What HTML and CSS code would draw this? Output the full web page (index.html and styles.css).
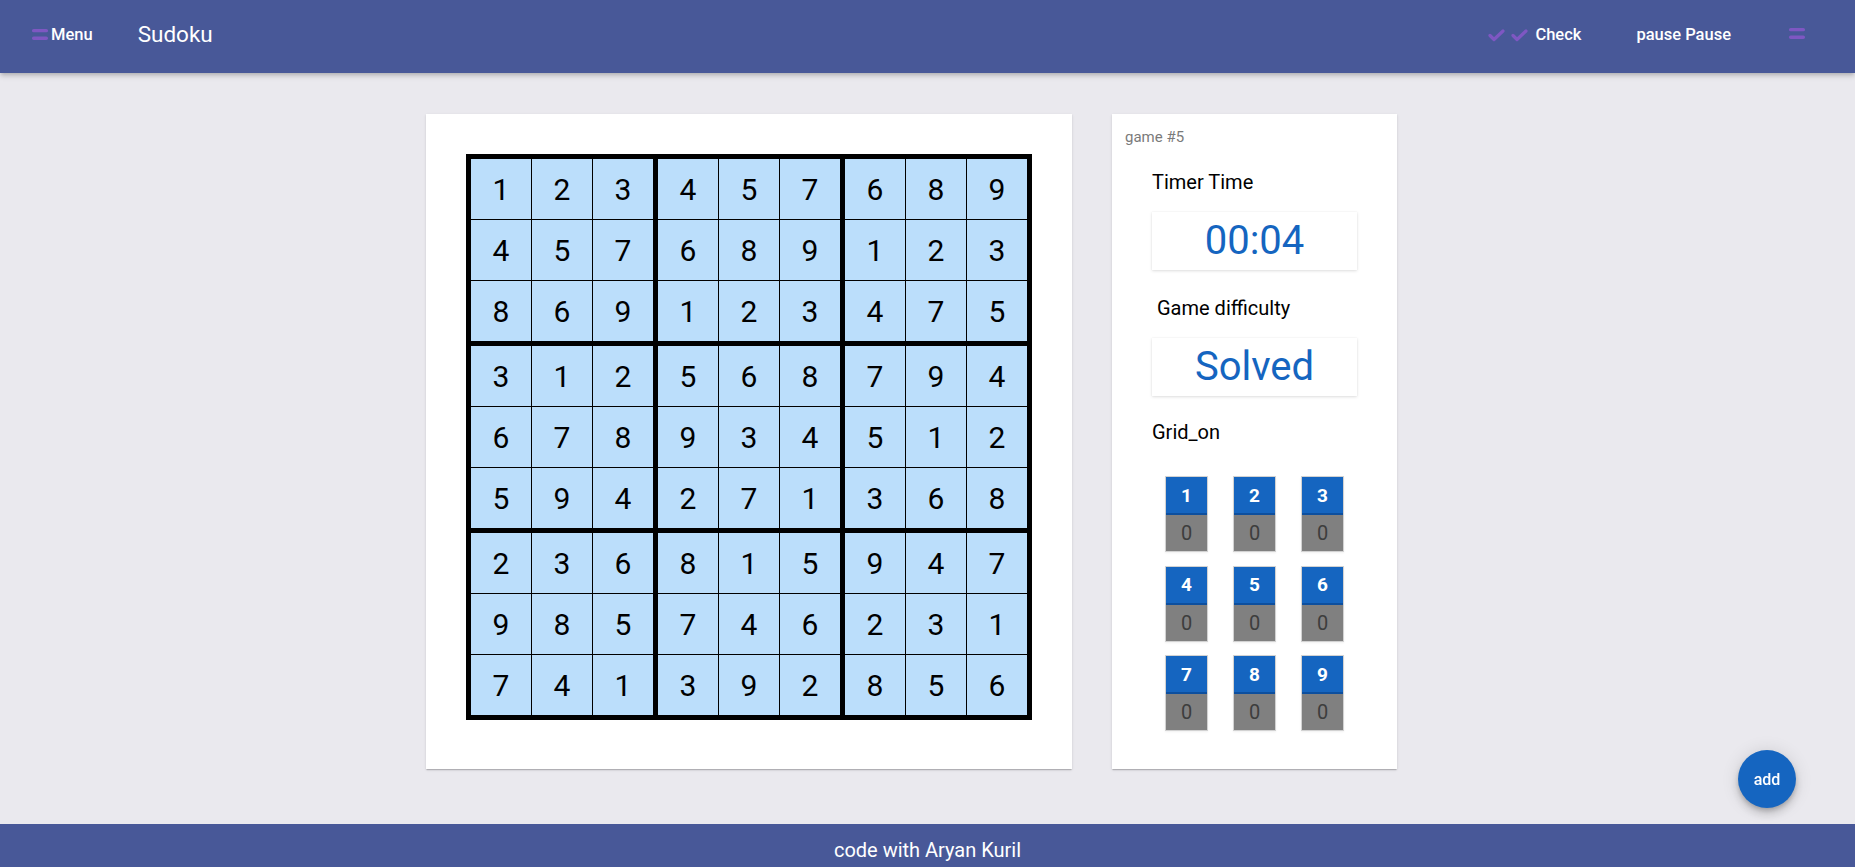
FILE: index.html
```html
<!DOCTYPE html>
<html lang="en">
<head>
<meta charset="utf-8">
<title>Sudoku</title>
<link rel="stylesheet" href="styles.css">
</head>
<body>
<header class="toolbar">
  <div class="tb-left">
    <button class="tb-btn">
      <svg class="ico-bars" width="16" height="11" viewBox="0 0 16 11"><rect x="0" y="0" width="16" height="3.3" rx="1.6"/><rect x="0" y="7.6" width="16" height="3.3" rx="1.6"/></svg>
      <span>Menu</span>
    </button>
    <span class="title">Sudoku</span>
  </div>
  <div class="tb-right">
    <button class="tb-btn check-btn">
      <svg class="ico-check" width="17" height="13" viewBox="0 0 17 13"><polyline points="2,6.5 6,10.5 15,2"/></svg>
      <svg class="ico-check" width="17" height="13" viewBox="0 0 17 13"><polyline points="2,6.5 6,10.5 15,2"/></svg>
      <span>Check</span>
    </button>
    <button class="tb-btn pause-btn"><span>pause Pause</span></button>
    <button class="tb-btn more-btn">
      <svg class="ico-bars" width="16" height="11" viewBox="0 0 16 11"><rect x="0" y="0" width="16" height="3.3" rx="1.6"/><rect x="0" y="7.6" width="16" height="3.3" rx="1.6"/></svg>
    </button>
  </div>
</header>

<main class="main">
  <section class="card board-card">
    <div class="board">
      <div class="block"><div class="cell">1</div><div class="cell">2</div><div class="cell">3</div><div class="cell">4</div><div class="cell">5</div><div class="cell">7</div><div class="cell">8</div><div class="cell">6</div><div class="cell">9</div></div>
      <div class="block"><div class="cell">4</div><div class="cell">5</div><div class="cell">7</div><div class="cell">6</div><div class="cell">8</div><div class="cell">9</div><div class="cell">1</div><div class="cell">2</div><div class="cell">3</div></div>
      <div class="block"><div class="cell">6</div><div class="cell">8</div><div class="cell">9</div><div class="cell">1</div><div class="cell">2</div><div class="cell">3</div><div class="cell">4</div><div class="cell">7</div><div class="cell">5</div></div>
      <div class="block"><div class="cell">3</div><div class="cell">1</div><div class="cell">2</div><div class="cell">6</div><div class="cell">7</div><div class="cell">8</div><div class="cell">5</div><div class="cell">9</div><div class="cell">4</div></div>
      <div class="block"><div class="cell">5</div><div class="cell">6</div><div class="cell">8</div><div class="cell">9</div><div class="cell">3</div><div class="cell">4</div><div class="cell">2</div><div class="cell">7</div><div class="cell">1</div></div>
      <div class="block"><div class="cell">7</div><div class="cell">9</div><div class="cell">4</div><div class="cell">5</div><div class="cell">1</div><div class="cell">2</div><div class="cell">3</div><div class="cell">6</div><div class="cell">8</div></div>
      <div class="block"><div class="cell">2</div><div class="cell">3</div><div class="cell">6</div><div class="cell">9</div><div class="cell">8</div><div class="cell">5</div><div class="cell">7</div><div class="cell">4</div><div class="cell">1</div></div>
      <div class="block"><div class="cell">8</div><div class="cell">1</div><div class="cell">5</div><div class="cell">7</div><div class="cell">4</div><div class="cell">6</div><div class="cell">3</div><div class="cell">9</div><div class="cell">2</div></div>
      <div class="block"><div class="cell">9</div><div class="cell">4</div><div class="cell">7</div><div class="cell">2</div><div class="cell">3</div><div class="cell">1</div><div class="cell">8</div><div class="cell">5</div><div class="cell">6</div></div>
    </div>
  </section>

  <aside class="card side-card">
    <div class="game-no">game #5</div>
    <div class="side-label timer-label">Timer Time</div>
    <div class="value-box">00:04</div>
    <div class="side-label diff-label">Game difficulty</div>
    <div class="value-box">Solved</div>
    <div class="side-label grid-label">Grid_on</div>
    <div class="tiles">
      <div class="tile"><div class="tile-num">1</div><div class="tile-count">0</div></div>
      <div class="tile"><div class="tile-num">2</div><div class="tile-count">0</div></div>
      <div class="tile"><div class="tile-num">3</div><div class="tile-count">0</div></div>
      <div class="tile"><div class="tile-num">4</div><div class="tile-count">0</div></div>
      <div class="tile"><div class="tile-num">5</div><div class="tile-count">0</div></div>
      <div class="tile"><div class="tile-num">6</div><div class="tile-count">0</div></div>
      <div class="tile"><div class="tile-num">7</div><div class="tile-count">0</div></div>
      <div class="tile"><div class="tile-num">8</div><div class="tile-count">0</div></div>
      <div class="tile"><div class="tile-num">9</div><div class="tile-count">0</div></div>
    </div>
  </aside>
</main>

<button class="fab">add</button>

<footer class="footer">code with Aryan Kuril</footer>
</body>
</html>
```

FILE: styles.css
```css
* { box-sizing: border-box; }

html, body {
  margin: 0;
  padding: 0;
  height: 100%;
}

body {
  font-family: Roboto, "Liberation Sans", Arial, sans-serif;
  background: #eae9ee;
  display: flex;
  flex-direction: column;
  height: 100vh;
  overflow: hidden;
}

button {
  font-family: inherit;
  border: 0;
  background: none;
  padding: 0;
  cursor: pointer;
}

/* ---------- toolbar ---------- */
.toolbar {
  flex: 0 0 73px;
  height: 73px;
  background: #485898;
  color: #fff;
  display: flex;
  align-items: center;
  justify-content: space-between;
  padding: 0 50px 4px 32px;
  box-shadow: 0 2px 4px -1px rgba(0,0,0,.2), 0 4px 5px 0 rgba(0,0,0,.10);
  position: relative;
  z-index: 2;
}

.tb-left, .tb-right {
  display: flex;
  align-items: center;
}

.tb-btn {
  color: #fff;
  font-size: 16.5px;
  font-weight: 500;
  line-height: 20px;
  display: flex;
  align-items: center;
}

.ico-bars { fill: #7e57c2; display: block; }
.ico-check {
  fill: none;
  stroke: #7e57c2;
  stroke-width: 3.2;
  stroke-linecap: round;
  stroke-linejoin: round;
  display: block;
  margin-top: 2px;
}

.tb-btn .ico-bars + span { margin-left: 3px; }

.title {
  font-size: 22.5px;
  line-height: 26px;
  margin-left: 45px;
  margin-bottom: 2px;
}

.check-btn .ico-check + .ico-check { margin-left: 6px; }
.check-btn span { margin-left: 7px; }

.pause-btn { margin-left: 55px; }
.more-btn { margin-left: 58px; margin-top: -2px; }

/* ---------- main ---------- */
.main {
  flex: 1 1 auto;
  display: flex;
  justify-content: center;
  align-items: flex-start;
  gap: 40px;
  padding: 41px 32px 0 0;
}

.card {
  background: #fff;
  box-shadow: 0 2px 1px -1px rgba(0,0,0,.12), 0 1px 1px 0 rgba(0,0,0,.08), 0 1px 3px 0 rgba(0,0,0,.10);
}

.board-card {
  padding: 40px 40px 49px;
}

.board {
  display: grid;
  grid-template-columns: repeat(3, 182px);
  gap: 5px;
  padding: 5px;
  background: #000;
}

.block {
  display: grid;
  grid-template-columns: repeat(3, 60px);
  grid-auto-rows: 60px;
  gap: 1px;
  background: #000;
}

.cell {
  background: #bbdefb;
  color: #000;
  font-size: 30px;
  display: flex;
  align-items: center;
  justify-content: center;
}

/* ---------- side card ---------- */
.side-card {
  width: 285px;
  height: 655px;
  padding: 15px 40px 0;
  display: flex;
  flex-direction: column;
}

.game-no {
  font-size: 15px;
  line-height: 16px;
  color: #7a7a7a;
  margin-left: -27px;
}

.side-label {
  font-size: 20px;
  line-height: 24px;
  color: #000;
}

.timer-label { margin-top: 25px; }
.diff-label { margin-top: 26px; padding-left: 5px; }
.grid-label { margin-top: 24px; }

.value-box {
  margin-top: 18px;
  height: 58px;
  line-height: 58px;
  text-align: center;
  font-size: 40px;
  color: #1565c0;
  background: #fff;
  box-shadow: 0 1px 3px rgba(0,0,0,.13), 0 0 1px rgba(0,0,0,.08);
}

.tiles {
  margin-top: 32px;
  display: grid;
  grid-template-columns: repeat(3, 43px);
  column-gap: 25px;
  row-gap: 13.5px;
  justify-content: center;
}

.tile {
  width: 43px;
  height: 76px;
  border: 1px solid #d2d2d2;
  display: flex;
  flex-direction: column;
  box-shadow: 0 1px 2px rgba(0,0,0,.06);
}

.tile-num {
  height: 38px;
  background: #1565c0;
  border-bottom: 2px solid #0d4f9e;
  color: #fff;
  font-weight: 700;
  font-size: 19px;
  display: flex;
  align-items: center;
  justify-content: center;
}

.tile-count {
  flex: 1;
  background: #808080;
  color: #3d3d3d;
  font-size: 20px;
  display: flex;
  align-items: center;
  justify-content: center;
}

/* ---------- fab ---------- */
.fab {
  position: fixed;
  right: 59px;
  bottom: 59px;
  width: 58px;
  height: 58px;
  border-radius: 50%;
  background: #1565c0;
  color: #fff;
  font-size: 16px;
  font-weight: 500;
  box-shadow: 0 3px 5px -1px rgba(0,0,0,.2), 0 6px 10px 0 rgba(0,0,0,.14), 0 1px 18px 0 rgba(0,0,0,.12);
  z-index: 3;
}

/* ---------- footer ---------- */
.footer {
  flex: 0 0 43px;
  height: 43px;
  background: #485898;
  color: #fff;
  font-size: 20px;
  text-align: center;
  padding-top: 14px;
  line-height: normal;
  overflow: hidden;
}
```
